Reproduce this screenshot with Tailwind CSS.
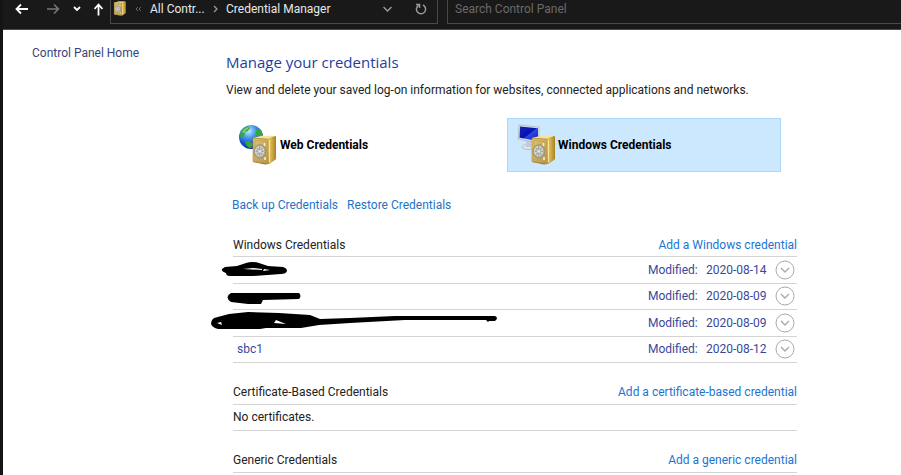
<!DOCTYPE html>
<html lang="en">
<head>
<meta charset="utf-8">
<title>Credential Manager</title>
<script src="https://cdn.jsdelivr.net/npm/@tailwindcss/browser@4"></script>
</head>
<body class="flex h-screen flex-col overflow-hidden border-l-3 border-[#141414] bg-white font-[Roboto,'Open_Sans',sans-serif] text-[12px] leading-4 text-[#222]">
<svg width="0" height="0" class="absolute" aria-hidden="true">
  <defs>
    <linearGradient id="gold" x1="0" y1="0" x2="1" y2="1"><stop offset="0" stop-color="#e0c674"/><stop offset="1" stop-color="#b8954a"/></linearGradient>
    <linearGradient id="side" x1="0" y1="0" x2="1" y2="0"><stop offset="0" stop-color="#ecd37a"/><stop offset=".5" stop-color="#d2b04a"/><stop offset="1" stop-color="#a98428"/></linearGradient>
    <radialGradient id="sea" cx=".4" cy=".25" r=".8"><stop offset="0" stop-color="#c5ecff"/><stop offset=".35" stop-color="#4a9ce8"/><stop offset=".7" stop-color="#1550c0"/><stop offset="1" stop-color="#092c86"/></radialGradient>
    <linearGradient id="screen" x1="0" y1="0" x2="1" y2="1"><stop offset="0" stop-color="#1725a8"/><stop offset=".5" stop-color="#0710b4"/><stop offset=".55" stop-color="#2d49e0"/><stop offset="1" stop-color="#0a18c8"/></linearGradient>
    <symbol id="safe" viewBox="0 0 25 30">
      <path d="M1 3 9 1l14 0 1 1v22l-7 5-4 .5L1 27z" fill="#9a7a30"/>
      <path d="M1 3 10 .8 23.500 1 16 4z" fill="#f4e4a0"/>
      <path d="M15.500 4 23.800 1.300V24l-7.300 5z" fill="url(#side)"/>
      <path d="M1 3.200 16 4.200V28.500L1 26.500z" fill="url(#gold)" stroke="#b59045" stroke-width=".7"/>
      <path d="M3 5.500 14 6.200V26L3 24.800z" fill="none" stroke="#c5a255" stroke-width=".8"/>
      <path d="M17.500 5v22" stroke="#f7e391" stroke-width="1"/>
      <ellipse cx="8" cy="16.500" rx="6" ry="6.800" fill="#aaa695" stroke="#948c70" stroke-width=".7"/>
      <ellipse cx="7.600" cy="16.200" rx="4.200" ry="4.900" fill="#c9c9c0" stroke="#e4e4dc" stroke-width=".8"/>
      <path d="M5 13l5.500 7M10.500 13 5 20M7.700 11v10.500M3.500 16.300h8.500" stroke="#92928a" stroke-width=".8"/>
      <circle cx="7.700" cy="16.300" r="1.500" fill="#e4e4de"/>
      <path d="M12.500 8v3M13 22v3" stroke="#f7f2d5" stroke-width="1.500"/>
    </symbol>
  </defs>
</svg>

<header class="flex h-[30px] shrink-0 items-start border-b border-[#4a4a4a] bg-[#191919] text-[#e8e8e8]">
  <nav class="flex h-[18px] w-[107px] shrink-0 items-center gap-[13px] pl-3" aria-label="History">
    <button aria-label="Back"><svg class="block" width="14" height="12" fill="none" stroke="#fff" stroke-width="1.800"><path d="M13 6H2M6 1.500 1.500 6 6 10.500"/></svg></button>
    <button class="ml-1" aria-label="Forward"><svg class="block" width="14" height="12" fill="none" stroke="#777" stroke-width="1.600"><path d="M1 6h11M8 1.500 12.500 6 8 10.500"/></svg></button>
    <button aria-label="Recent locations"><svg class="block" width="8" height="6" fill="none" stroke="#fff" stroke-width="1.800"><path d="M1 1l3 3 3-3"/></svg></button>
    <button aria-label="Up"><svg class="block" width="9" height="13" fill="none" stroke="#fff" stroke-width="1.800"><path d="M4.500 12.500V2M.500 6l4-4.500 4 4.500"/></svg></button>
  </nav>
  <div class="flex h-6 w-[328px] shrink-0 border-r border-b border-l border-[#484848] pb-[6px]">
    <div class="flex flex-1 items-center pl-[2px]">
      <svg class="mr-[8px]" width="14" height="15" aria-hidden="true"><use href="#safe"/></svg>
      <svg class="mr-2" width="7" height="6" fill="none" stroke="#666" aria-hidden="true"><path d="M3 1 1 3l2 2M6 1 4 3l2 2"/></svg>
      <a href="#" class="w-[63px] whitespace-nowrap">All Contr...</a>
      <svg class="mr-[8px]" width="5" height="8" fill="none" stroke="#999" stroke-width="1.300" aria-hidden="true"><path d="M1 1l3 3-3 3"/></svg>
      <a href="#" class="whitespace-nowrap">Credential Manager</a>
    </div>
    <button class="flex w-9 items-center justify-center" aria-label="Previous locations"><svg width="9" height="6" fill="none" stroke="#999" stroke-width="1.500"><path d="M.500 1l4 4 4-4"/></svg></button>
    <button class="flex w-8 items-center justify-center" aria-label="Refresh"><svg width="12" height="12" fill="none" stroke="#999" stroke-width="1.500"><path d="M8 2a4.600 4.600 0 1 1-4.500.300M1 1.500h3.500V5"/></svg></button>
  </div>
  <input type="search" aria-label="Search Control Panel" placeholder="Search Control Panel" class="ml-[9px] h-6 min-w-0 flex-1 border-b border-l border-[#484848] bg-transparent pb-[6px] pl-[7px] placeholder:text-[#6a6a6a]">
</header>

<div class="flex flex-1">
  <aside class="w-[223px] shrink-0 pt-[15px] pl-[29px]"><a href="#" class="text-[#37447c]">Control Panel Home</a></aside>
  <main class="min-w-0 flex-1 pt-[22px] pr-[104px]">
    <h1 class="font-['Open_Sans',sans-serif] text-[15px] leading-5 text-[#1c429e]">Manage your credentials</h1>
    <p class="mt-[10px] whitespace-nowrap">View and delete your saved log-on information for websites, connected applications and networks.</p>
    <div class="mt-5 mr-4 ml-[2px] grid grid-cols-2 gap-[5px] font-bold text-black">
      <button class="flex h-[54px] items-center border border-transparent pl-[9px] text-left">
        <svg class="mr-[2px] shrink-0" width="40" height="42" aria-hidden="true">
          <circle cx="13" cy="13" r="12" fill="url(#sea)"/>
          <path d="M3 8Q6 3 10 2l2 2-2 3-3 1-1 4-3 2Q1 11 3 8M18 6l4-1q3 4 3 8l-4 1-3-3zM7 18l4-1 4 3-2 4Q9 24 7 18" fill="#35a546"/>
          <path d="M4 8Q7 4 10 3l1 1-3 2-2 3z" fill="#8bd27b"/>
          <use href="#safe" x="14" y="11" width="25" height="30"/>
        </svg>Web Credentials
      </button>
      <button class="flex h-[54px] items-center border border-[#aad8fb] bg-[#cce8ff] pl-[9px] text-left">
        <svg class="mr-[1px] shrink-0" width="40" height="42" aria-hidden="true">
          <ellipse cx="11" cy="23" rx="6" ry="2.500" fill="#dfe5ea" stroke="#a5b0bc" stroke-width=".7"/>
          <path d="M9 17h5v6H9z" fill="#c3ccd6"/>
          <path d="M2 1 22 3v16L1 15z" fill="#dbe3eb" stroke="#a9b6c4" stroke-width=".8"/>
          <path d="M3 2.500 21 4.200V17L2.500 13.800z" fill="url(#screen)"/>
          <use href="#safe" x="14" y="11" width="25" height="30"/>
        </svg>Windows Credentials
      </button>
    </div>
    <div class="mt-[25px] ml-[6px] flex gap-[9px] text-[#1d74c9]"><a href="#">Back up Credentials</a><a href="#">Restore Credentials</a></div>

    <section class="relative mt-6 ml-[7px]">
      <div class="flex h-5 justify-between border-b border-[#d4d4d4]"><h2>Windows Credentials</h2><a href="#" class="text-[#1d74d0]">Add a Windows credential</a></div>
      <table class="w-full border-collapse text-[#3a489b]">
        <tbody>
          <tr class="h-[26px] border-b border-[#d4d4d4]"><td></td><td class="w-[58px]">Modified:</td><td class="w-[69px]">2020-08-14</td><td class="w-[22px]"><button class="block" aria-label="Expand"><svg class="block" width="20" height="20" fill="none" stroke="#aaa"><circle cx="10" cy="10" r="9"/><path d="M6 8l4 4 4-4" stroke-width="1.400"/></svg></button></td></tr>
          <tr class="h-[26px] border-b border-[#d4d4d4]"><td></td><td>Modified:</td><td>2020-08-09</td><td><button class="block" aria-label="Expand"><svg class="block" width="20" height="20" fill="none" stroke="#aaa"><circle cx="10" cy="10" r="9"/><path d="M6 8l4 4 4-4" stroke-width="1.400"/></svg></button></td></tr>
          <tr class="h-[27px] border-b border-[#d4d4d4]"><td></td><td>Modified:</td><td>2020-08-09</td><td><button class="block" aria-label="Expand"><svg class="block" width="20" height="20" fill="none" stroke="#aaa"><circle cx="10" cy="10" r="9"/><path d="M6 8l4 4 4-4" stroke-width="1.400"/></svg></button></td></tr>
          <tr class="h-[26px] border-b border-[#d4d4d4]"><td class="pl-1">sbc1</td><td>Modified:</td><td>2020-08-12</td><td><button class="block" aria-label="Expand"><svg class="block" width="20" height="20" fill="none" stroke="#aaa"><circle cx="10" cy="10" r="9"/><path d="M6 8l4 4 4-4" stroke-width="1.400"/></svg></button></td></tr>
        </tbody>
      </table>
      <!-- Marker strokes over the account names; viewBox is offset to the section's corner -->
      <svg class="pointer-events-none absolute top-[19px] -left-[33px]" width="310" height="90" viewBox="0 26 310 90" aria-hidden="true">
        <path fill-rule="evenodd" d="M25 37 37 36 46 33Q52 31 59 33L68 36 83 37Q87 38 87 41 86 44 81 44L53 46H30Q26 46 26 43 21 41 22 39zM43 39l10-1 9 1v1zM64 39l6 1-7 1z"/>
        <path d="M31 63H63L99 63Q102 66 99 69L63 70 61 74 48 74 31 72Q24 67 31 63"/>
        <path fill-rule="evenodd" d="M14 88 29 84 48 82 79 83 110 85 120 89 150 88 195 86H295Q299 88 295 91L289 91 288 92 286 90H205L150 93 119 95 101 98H66L60 99H18Q11 97 11 93 11 90 14 88M17 93l5 2-1-3zM74 93l12 1-10-4z"/>
      </svg>
    </section>

    <section class="mt-[21px] ml-[7px]">
      <div class="flex h-[21px] justify-between border-b border-[#d4d4d4]"><h2>Certificate-Based Credentials</h2><a href="#" class="text-[#1d74d0]">Add a certificate-based credential</a></div>
      <p class="flex h-[26px] items-center border-b border-[#d4d4d4]">No certificates.</p>
    </section>
    <section class="mt-[21px] ml-[7px]">
      <div class="flex h-[21px] justify-between border-b border-[#d4d4d4]"><h2>Generic Credentials</h2><a href="#" class="text-[#1d74d0]">Add a generic credential</a></div>
    </section>
  </main>
</div>
</body>
</html>
